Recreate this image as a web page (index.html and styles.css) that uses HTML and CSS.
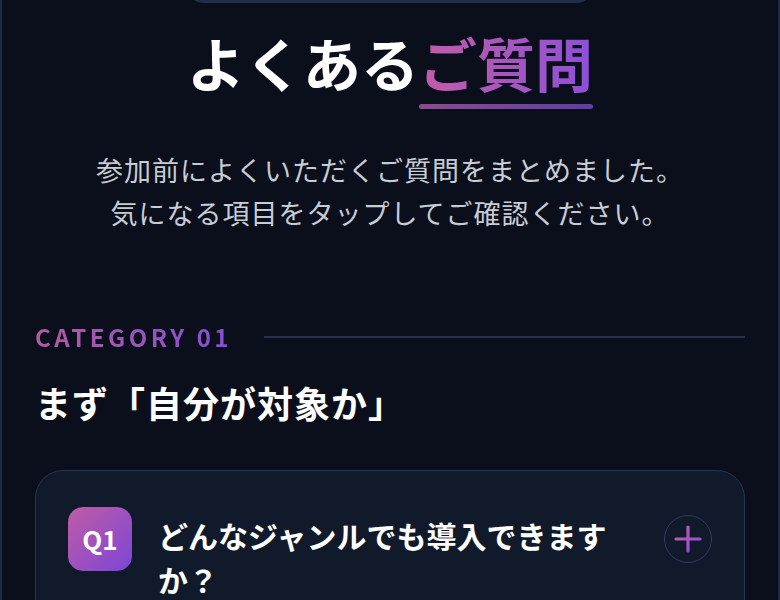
FILE: index.html
```html
<!DOCTYPE html>
<html lang="ja">
<head>
    <meta charset="UTF-8">
    <meta name="viewport" content="width=device-width, initial-scale=1.0">
    <title>よくあるご質問</title>
    <link rel="stylesheet" href="styles.css">
</head>
<body>
    <div class="page">
        <div class="prev-pill"></div>

        <section class="faq-head">
            <h1 class="title">よくある<span class="accent">ご質問</span></h1>
            <p class="lead">参加前によくいただくご質問をまとめました。<br>気になる項目をタップしてご確認ください。</p>
        </section>

        <section class="category">
            <div class="cat-label">
                <span class="cat-num">CATEGORY 01</span>
                <span class="cat-line"></span>
            </div>
            <h2 class="cat-title">まず「自分が対象か」</h2>

            <div class="faq-item">
                <div class="q-badge">Q1</div>
                <div class="q-text">どんなジャンルでも導入できますか？</div>
                <button class="toggle" aria-label="開く">
                    <svg width="30" height="30" viewBox="0 0 30 30">
                        <defs>
                            <linearGradient id="plusGrad" x1="0" y1="0" x2="1" y2="1">
                                <stop offset="0" stop-color="#c65ca8"/>
                                <stop offset="1" stop-color="#8a4fe0"/>
                            </linearGradient>
                        </defs>
                        <path d="M15 3 V27 M3 15 H27" stroke="url(#plusGrad)" stroke-width="3.2" stroke-linecap="round" fill="none"/>
                    </svg>
                </button>
            </div>
        </section>
    </div>
</body>
</html>
```

FILE: styles.css
```css
* {
    margin: 0;
    padding: 0;
    box-sizing: border-box;
}

body {
    background-color: #0a0f1b;
    color: white;
    font-family: 'Noto Sans CJK JP', 'Noto Sans', sans-serif;
}

.page {
    min-height: 600px;
    border-left: 2px solid #1d2a45;
    border-right: 2px solid #1d2a45;
    padding: 0 33px;
    overflow: hidden;
}

.prev-pill {
    width: 408px;
    height: 40px;
    margin: -37px auto 0;
    background-color: #222e48;
    border-radius: 0 0 18px 18px;
}

.faq-head {
    text-align: center;
    padding-top: 25px;
}

.title {
    font-size: 58px;
    font-weight: bold;
    line-height: 1.2;
}

.accent {
    position: relative;
    background: linear-gradient(90deg, #c45ca8, #8d50d8);
    -webkit-background-clip: text;
    background-clip: text;
    color: transparent;
}

.accent::after {
    content: "";
    position: absolute;
    left: 0;
    right: 0;
    bottom: -5px;
    height: 5px;
    border-radius: 3px;
    background: linear-gradient(90deg, #8e4a90, #5e3ea6);
}

.lead {
    margin-top: 50px;
    font-size: 27px;
    line-height: 43px;
    color: #c8ccd4;
    letter-spacing: 1px;
}

.category {
    margin-top: 90px;
}

.cat-label {
    display: flex;
    align-items: center;
    gap: 32px;
}

.cat-num {
    font-size: 24px;
    font-weight: bold;
    letter-spacing: 3.5px;
    line-height: 26px;
    background: linear-gradient(90deg, #b35aa0, #8350d4);
    -webkit-background-clip: text;
    background-clip: text;
    color: transparent;
}

.cat-line {
    flex: 1;
    height: 2px;
    background-color: #25334b;
}

.cat-title {
    margin-top: 28px;
    font-size: 36px;
    font-weight: bold;
    line-height: 48px;
    letter-spacing: 1px;
}

.faq-item {
    margin-top: 44px;
    display: flex;
    align-items: flex-start;
    gap: 26px;
    padding: 36px 32px;
    background-color: #111a2b;
    border: 1px solid #27344c;
    border-radius: 28px;
}

.q-badge {
    flex: none;
    width: 64px;
    height: 64px;
    border-radius: 15px;
    background: linear-gradient(135deg, #c05ca6, #7c46d6);
    display: flex;
    align-items: center;
    justify-content: center;
    font-size: 26px;
    font-weight: bold;
}

.q-text {
    width: 460px;
    font-size: 30px;
    font-weight: bold;
    line-height: 44px;
    padding-top: 6px;
}

.toggle {
    flex: none;
    margin-left: auto;
    width: 48px;
    height: 48px;
    margin-top: 8px;
    border-radius: 50%;
    border: 1.5px solid #35375f;
    background: transparent;
    display: flex;
    align-items: center;
    justify-content: center;
}
```
